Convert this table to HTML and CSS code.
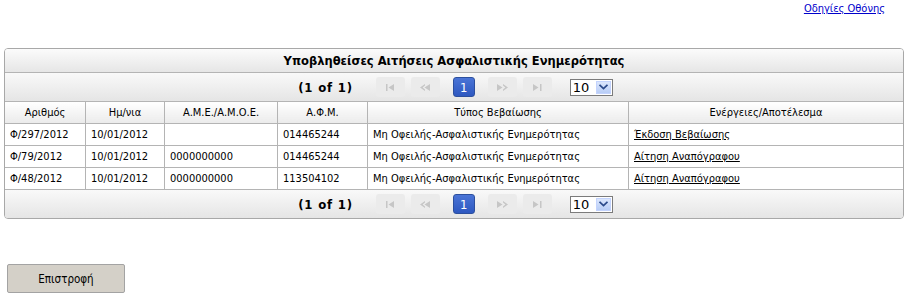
FILE: index.html
```html
<!DOCTYPE html>
<html lang="el">
<head>
<meta charset="utf-8">
<title>Υποβληθείσες Αιτήσεις</title>
<link rel="stylesheet" href="styles.css">
</head>
<body>
<div class="topbar"><a href="#" class="help-link">Οδηγίες Οθόνης</a></div>

<div class="panel">
  <div class="panel-title">Υποβληθείσες Αιτήσεις Ασφαλιστικής Ενημερότητας</div>
  <div class="paginator">
    <span class="current">(1 of 1)</span>
    <span class="pg-btn disabled"><svg width="9" height="7" viewBox="0 0 9 7"><rect x="0" y="0" width="1.5" height="7"/><path d="M2.5 3.5 L8 0 L8 7 Z"/></svg></span>
    <span class="pg-btn disabled"><svg width="11" height="7" viewBox="0 0 11 7"><path d="M0 3.5 L5 0 L5 1.5 L2.6 3.5 L5 5.5 L5 7 Z"/><path d="M4.5 3.5 L10 0 L10 7 Z"/></svg></span>
    <span class="pg-page">1</span>
    <span class="pg-btn disabled"><svg width="11" height="7" viewBox="0 0 11 7"><path d="M0 0 L5.5 3.5 L0 7 Z"/><path d="M6 0 L11 3.5 L6 7 L6 5.5 L8.4 3.5 L6 1.5 Z"/></svg></span>
    <span class="pg-btn disabled"><svg width="9" height="7" viewBox="0 0 9 7"><path d="M0 0 L5.5 3.5 L0 7 Z"/><rect x="7" y="0" width="1.5" height="7"/></svg></span>
    <span class="rows-select"><span class="rows-value">10</span><span class="rows-arrow"><svg width="9" height="6" viewBox="0 0 9 6"><path d="M0.5 0.8 L4.5 4.6 L8.5 0.8" fill="none" stroke="#2b4a8a" stroke-width="1.8"/></svg></span></span>
  </div>
  <table class="grid">
    <thead>
      <tr>
        <th class="c-num">Αριθμός</th>
        <th class="c-date">Ημ/νια</th>
        <th class="c-ame">Α.Μ.Ε./Α.Μ.Ο.Ε.</th>
        <th class="c-afm">Α.Φ.Μ.</th>
        <th class="c-type">Τύπος Βεβαίωσης</th>
        <th class="c-act">Ενέργειες/Αποτέλεσμα</th>
      </tr>
    </thead>
    <tbody>
      <tr>
        <td>Φ/297/2012</td>
        <td>10/01/2012</td>
        <td></td>
        <td>014465244</td>
        <td>Μη Οφειλής-Ασφαλιστικής Ενημερότητας</td>
        <td><a href="#">Έκδοση Βεβαίωσης</a></td>
      </tr>
      <tr>
        <td>Φ/79/2012</td>
        <td>10/01/2012</td>
        <td>0000000000</td>
        <td>014465244</td>
        <td>Μη Οφειλής-Ασφαλιστικής Ενημερότητας</td>
        <td><a href="#">Αίτηση Αναπόγραφου</a></td>
      </tr>
      <tr>
        <td>Φ/48/2012</td>
        <td>10/01/2012</td>
        <td>0000000000</td>
        <td>113504102</td>
        <td>Μη Οφειλής-Ασφαλιστικής Ενημερότητας</td>
        <td><a href="#">Αίτηση Αναπόγραφου</a></td>
      </tr>
    </tbody>
  </table>
  <div class="paginator bottom">
    <span class="current">(1 of 1)</span>
    <span class="pg-btn disabled"><svg width="9" height="7" viewBox="0 0 9 7"><rect x="0" y="0" width="1.5" height="7"/><path d="M2.5 3.5 L8 0 L8 7 Z"/></svg></span>
    <span class="pg-btn disabled"><svg width="11" height="7" viewBox="0 0 11 7"><path d="M0 3.5 L5 0 L5 1.5 L2.6 3.5 L5 5.5 L5 7 Z"/><path d="M4.5 3.5 L10 0 L10 7 Z"/></svg></span>
    <span class="pg-page">1</span>
    <span class="pg-btn disabled"><svg width="11" height="7" viewBox="0 0 11 7"><path d="M0 0 L5.5 3.5 L0 7 Z"/><path d="M6 0 L11 3.5 L6 7 L6 5.5 L8.4 3.5 L6 1.5 Z"/></svg></span>
    <span class="pg-btn disabled"><svg width="9" height="7" viewBox="0 0 9 7"><path d="M0 0 L5.5 3.5 L0 7 Z"/><rect x="7" y="0" width="1.5" height="7"/></svg></span>
    <span class="rows-select"><span class="rows-value">10</span><span class="rows-arrow"><svg width="9" height="6" viewBox="0 0 9 6"><path d="M0.5 0.8 L4.5 4.6 L8.5 0.8" fill="none" stroke="#2b4a8a" stroke-width="1.8"/></svg></span></span>
  </div>
</div>

<div class="actions">
  <button type="button" class="btn-back">Επιστροφή</button>
</div>
</body>
</html>
```

FILE: styles.css
```css
body {
  margin: 0;
  background: #ffffff;
  font-family: "DejaVu Sans Condensed", "DejaVu Sans", sans-serif;
  font-stretch: condensed;
  font-size: 11px;
  color: #000;
}

.topbar {
  display: flex;
  justify-content: flex-end;
  height: 48px;
  padding-right: 25px;
  box-sizing: border-box;
}

.help-link {
  margin-top: 2px;
  font-size: 11px;
  color: #0000cc;
  text-decoration: underline;
  line-height: 14px;
}

.panel {
  width: 900px;
  margin-left: 4px;
  border: 1px solid #a8a8a8;
  border-radius: 4px;
  box-sizing: border-box;
  overflow: hidden;
}

.panel-title {
  height: 23px;
  line-height: 23px;
  text-align: center;
  font-weight: bold;
  font-size: 12.8px;
  background: linear-gradient(#fbfbfb, #e6e6e6);
  border-bottom: 1px solid #b4b4b4;
}

.paginator {
  height: 28px;
  padding-left: 3px;
  display: flex;
  align-items: center;
  justify-content: center;
  gap: 6px;
  background: linear-gradient(#f9f9f9, #e5e5e5);
  border-bottom: 1px solid #b4b4b4;
}

.paginator.bottom {
  border-bottom: 0;
  border-top: 1px solid #b4b4b4;
}

.current {
  font-weight: bold;
  font-size: 13px;
  letter-spacing: 0.8px;
  margin-right: 17px;
}

.pg-btn {
  width: 29px;
  height: 20px;
  display: flex;
  align-items: center;
  justify-content: center;
  background: #ebebeb;
  border-radius: 3px;
  fill: #c6c6c6;
}

.pg-page {
  width: 22px;
  height: 20px;
  margin: 0 7px;
  box-sizing: border-box;
  display: flex;
  align-items: center;
  justify-content: center;
  background: linear-gradient(#4a74d6, #2e58c0);
  border: 1px solid #2c4f9e;
  border-radius: 3px;
  color: #fff;
  font-size: 13px;
}

.rows-select {
  margin-left: 12px;
  width: 43px;
  height: 17px;
  box-sizing: border-box;
  display: flex;
  align-items: stretch;
  background: #fff;
  border: 1px solid #7b7b7b;
}

.rows-value {
  flex: 1;
  font-size: 13px;
  line-height: 15px;
  padding-left: 2px;
  font-family: "DejaVu Sans", sans-serif;
  font-stretch: normal;
}

.rows-arrow {
  width: 15px;
  margin: 1px;
  display: flex;
  align-items: center;
  justify-content: center;
  background: linear-gradient(#dbe6fc, #b8cdf6);
  border: 1px solid #c3d3fd;
  box-sizing: border-box;
}

.grid {
  width: 100%;
  border-collapse: collapse;
  table-layout: fixed;
}

.grid th {
  height: 21px;
  font-weight: normal;
  text-align: center;
  background: linear-gradient(#ffffff, #ebebeb);
  border-right: 1px solid #b4b4b4;
  border-bottom: 1px solid #b4b4b4;
  padding: 0;
}

.grid td {
  height: 21px;
  padding: 0 5px;
  border-right: 1px solid #b4b4b4;
  border-bottom: 1px solid #b4b4b4;
  white-space: nowrap;
}

.grid tr > :last-child { border-right: 0; }
.grid tbody tr:last-child td { border-bottom: 0; }

.grid a { color: #000; }

.c-num { width: 80px; }
.c-date { width: 78px; }
.c-ame { width: 112px; }
.c-afm { width: 89px; }
.c-type { width: 260px; }

.actions {
  padding: 45px 0 0 7px;
}

.btn-back {
  width: 118px;
  height: 29px;
  background: #d4d0c8;
  border: 1px solid #a3a3a3;
  border-radius: 2px;
  font-family: inherit;
  font-stretch: condensed;
  font-size: 11.5px;
  color: #000;
}
```
